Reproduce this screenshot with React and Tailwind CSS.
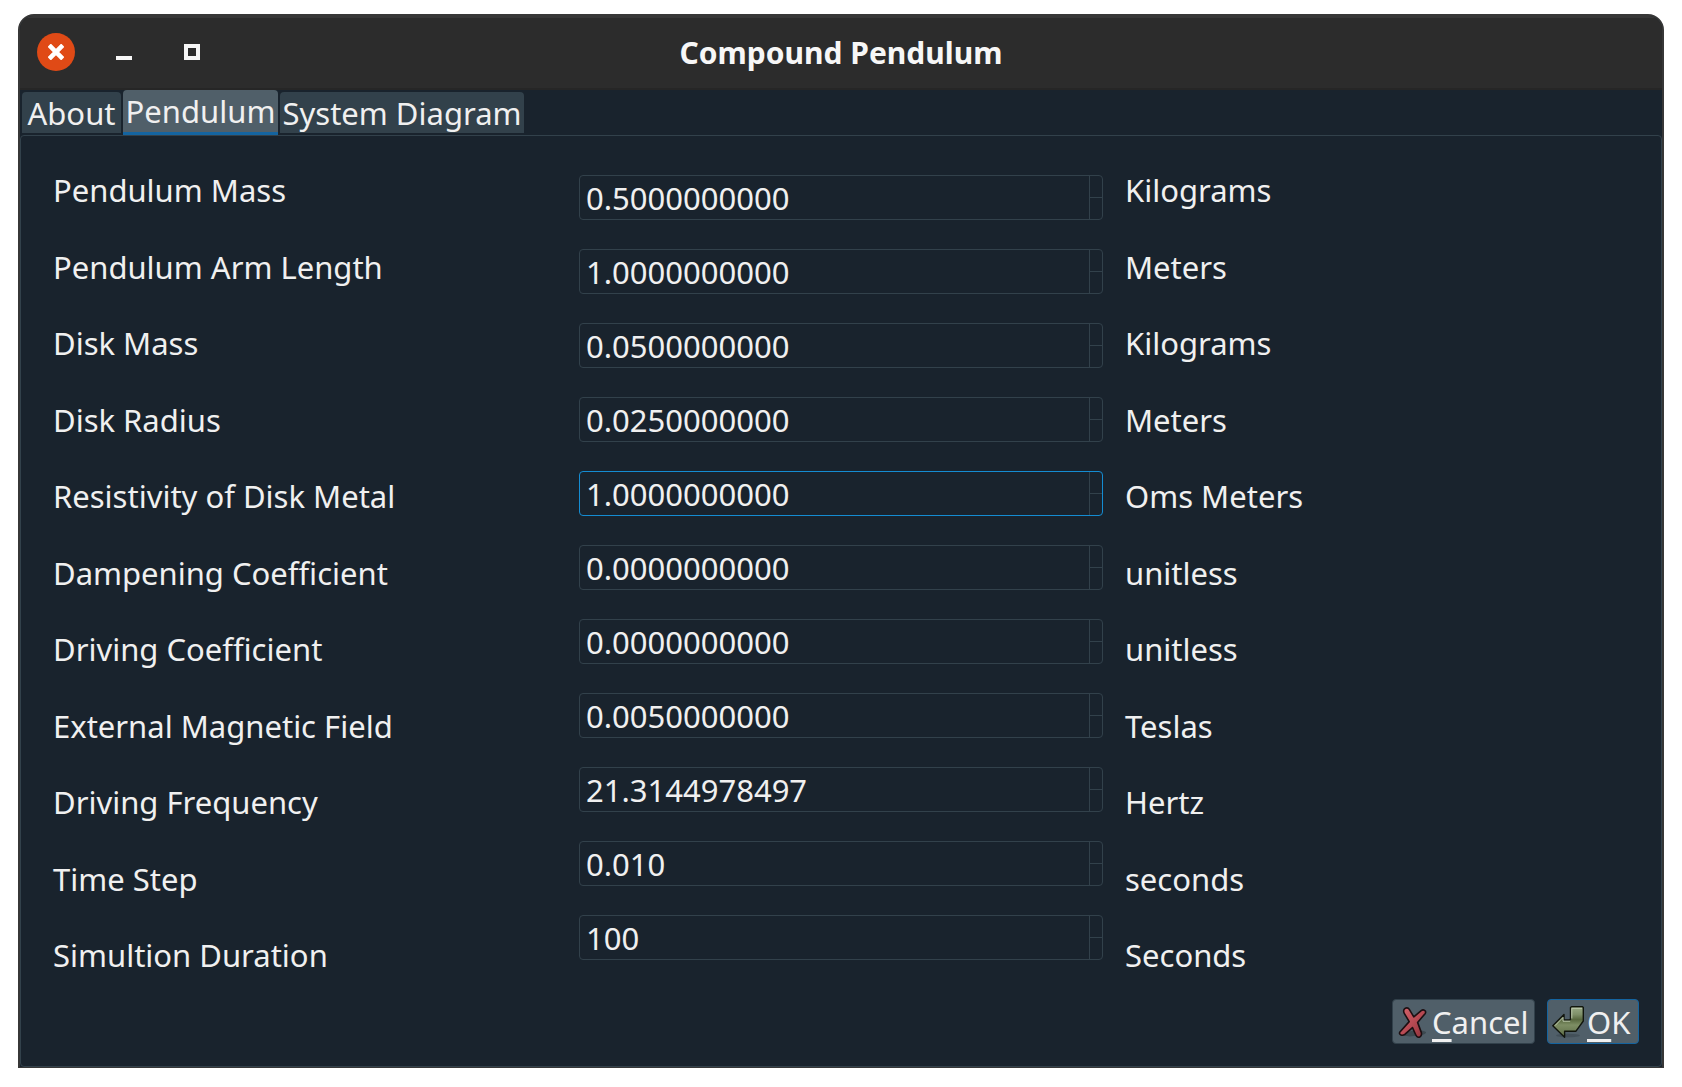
import React, { useState } from "react";

const FIELDS = [
  { id: "pendulum-mass", label: "Pendulum Mass", value: "0.5000000000", unit: "Kilograms" },
  { id: "arm-length", label: "Pendulum Arm Length", value: "1.0000000000", unit: "Meters" },
  { id: "disk-mass", label: "Disk Mass", value: "0.0500000000", unit: "Kilograms" },
  { id: "disk-radius", label: "Disk Radius", value: "0.0250000000", unit: "Meters" },
  { id: "resistivity", label: "Resistivity of Disk Metal", value: "1.0000000000", unit: "Oms Meters", active: true },
  { id: "dampening", label: "Dampening Coefficient", value: "0.0000000000", unit: "unitless" },
  { id: "driving-coefficient", label: "Driving Coefficient", value: "0.0000000000", unit: "unitless" },
  { id: "magnetic-field", label: "External Magnetic Field", value: "0.0050000000", unit: "Teslas" },
  { id: "driving-frequency", label: "Driving Frequency", value: "21.3144978497", unit: "Hertz" },
  { id: "time-step", label: "Time Step", value: "0.010", unit: "seconds" },
  { id: "duration", label: "Simultion Duration", value: "100", unit: "Seconds" },
];

function TitleBar() {
  return (
    <header className="grid h-[74px] grid-cols-[1fr_auto_1fr] items-center border-t-2 border-b-2 border-t-[#373737] border-b-[#262626] bg-[#2c2c2c]">
      <div className="flex items-center pb-[2px] pl-[17px]">
        <button type="button" aria-label="Close" className="flex size-[38px] items-center justify-center rounded-full bg-[#e04a16]">
          <svg viewBox="0 0 16 16" className="size-4" stroke="#fff" strokeWidth="4.600" fill="none">
            <path d="M1.200 1.200 14.800 14.800M14.800 1.200 1.200 14.800" />
          </svg>
        </button>
        <button type="button" aria-label="Minimize" className="ml-[30px] flex size-[38px] items-center justify-center">
          <svg viewBox="0 0 16 16" className="size-4" fill="#f7f7f7">
            <path d="M0 12h16v4H0z" />
          </svg>
        </button>
        <button type="button" aria-label="Maximize" className="ml-[30px] flex size-[38px] items-center justify-center">
          <svg viewBox="0 0 16 16" className="size-4" fill="none" stroke="#f7f7f7" strokeWidth="4">
            <path d="M2 2h12v12H2z" />
          </svg>
        </button>
      </div>
      <h1 className="text-[30px] leading-10 font-bold text-[#f7f7f7]">Compound Pendulum</h1>
    </header>
  );
}

function Tab({ children, selected, width }) {
  return (
    <button
      type="button"
      role="tab"
      aria-selected={selected}
      className={
        selected
          ? `${width} h-[45px] rounded-t border-b-3 border-[#1464a0] bg-[#505f69] text-center leading-10 whitespace-nowrap`
          : `${width} mb-[2px] h-[41px] rounded-t bg-[#32414b] text-center leading-10 whitespace-nowrap`
      }
    >
      {children}
    </button>
  );
}

function SpinBox({ field }) {
  const [value, setValue] = useState(field.value);
  return (
    <div
      className={
        field.active
          ? "flex h-[45px] overflow-hidden rounded border border-[#148cd2]"
          : "flex h-[45px] overflow-hidden rounded border border-[#32414b]"
      }
    >
      <input
        id={field.id}
        type="text"
        inputMode="decimal"
        value={value}
        onChange={(e) => setValue(e.target.value)}
        className="min-w-0 flex-1 bg-transparent pl-[6px] outline-none"
      />
      <div className="flex w-[13px] flex-col border-l border-[#32414b]">
        <button type="button" aria-label={`Increase ${field.label}`} className="flex-1 border-b border-[#32414b]" />
        <button type="button" aria-label={`Decrease ${field.label}`} className="flex-1" />
      </div>
    </div>
  );
}

function CancelIcon() {
  return (
    <svg viewBox="0 0 32 32" className="size-8 shrink-0" aria-hidden="true">
      <defs>
        <linearGradient id="cancelRed" x1="0" y1="0" x2="1" y2="1">
          <stop offset="0" stopColor="#d9666d" />
          <stop offset="0.5" stopColor="#b84b54" />
          <stop offset="1" stopColor="#8d2f38" />
        </linearGradient>
      </defs>
      <path d="M5 28c6-3 18-5 24-2 1 2-6 4-12 4-5 1-12 0-12-2z" fill="#2c363d" opacity="0.55" />
      <path
        d="M7.2 3.2C8.600 1.400 11.200 1.500 12.300 3.300L16.800 10.800 24.200 4.600C26.500 2.900 29.600 5 28.300 7.400L20.600 16.400 24.300 26.400C25 29.200 23.600 31.400 21.600 31.300 20.200 31.200 19.300 30.200 18.700 28.800L15.500 21.600 7.800 28.400C5.500 30.200 1.600 29 2.700 26.200L12.200 15.600 7.400 7.600C6.600 6.200 6.500 4.400 7.200 3.200Z"
        fill="url(#cancelRed)"
        stroke="#1c0f12"
        strokeWidth="1.6"
        strokeLinejoin="round"
      />
    </svg>
  );
}

function OkIcon() {
  return (
    <svg viewBox="0 0 32 32" className="size-8 shrink-0" aria-hidden="true">
      <defs>
        <linearGradient id="okGreen" x1="0" y1="0" x2="0" y2="1">
          <stop offset="0" stopColor="#9aaa86" />
          <stop offset="0.25" stopColor="#7f9069" />
          <stop offset="0.42" stopColor="#58683f" />
          <stop offset="0.6" stopColor="#7d8e64" />
          <stop offset="1" stopColor="#5d6c45" />
        </linearGradient>
      </defs>
      <ellipse cx="16" cy="29.500" rx="12" ry="1.800" fill="#2c363d" opacity="0.35" />
      <path
        d="M18.500 1.500 19.500 .8H30.500L31.300 1.600V15L24 25.200H12.600V31.200L.8 19.800 12 8.400V14H17.600L18.500 13Z"
        fill="url(#okGreen)"
        stroke="#11150d"
        strokeWidth="1.400"
        strokeLinejoin="round"
      />
      <path d="M19.800 12.500V2.300H30" fill="none" stroke="#bcc8ad" strokeWidth="1" />
      <path d="M3 19.600 11 11.500V15.200H18.200" fill="none" stroke="#bcc8ad" strokeWidth="1" />
    </svg>
  );
}

function Mnemonic({ children }) {
  return <span className="underline decoration-3 underline-offset-[5px] [text-decoration-skip-ink:none]">{children}</span>;
}

export default function App() {
  return (
    <div className="flex min-h-screen flex-col bg-white px-[18px] pt-[14px] pb-[19px] font-['Noto_Sans',sans-serif] text-[31px] leading-10 text-[#f0f0f0]">
      <main className="flex flex-1 flex-col overflow-hidden rounded-t-2xl border-2 border-b border-[#373737] bg-[#19232d]">
        <TitleBar />
        <div role="tablist" className="flex items-end gap-[2px] pl-[2px]">
          <Tab width="w-[99px]">About</Tab>
          <Tab width="w-[155px]" selected>Pendulum</Tab>
          <Tab width="w-[244px]">System Diagram</Tab>
        </div>
        <form
          onSubmit={(e) => e.preventDefault()}
          className="flex flex-1 flex-col gap-6 rounded border border-[#32414b] pt-[34px] pr-[22px] pb-[22px] pl-8"
        >
          <div className="grid flex-1 grid-cols-[504fr_524fr_514fr] gap-[22px]">
            <div className="flex flex-col justify-between">
              {FIELDS.map((f) => (
                <label key={f.id} htmlFor={f.id} className="whitespace-nowrap">{f.label}</label>
              ))}
            </div>
            <div className="flex flex-col gap-[29px] pt-[5px]">
              {FIELDS.map((f) => (
                <SpinBox key={f.id} field={f} />
              ))}
            </div>
            <div className="flex flex-col justify-between">
              {FIELDS.map((f) => (
                <span key={f.id}>{f.unit}</span>
              ))}
            </div>
          </div>
          <div className="flex justify-end gap-3">
            <button type="button" className="flex h-[45px] w-[143px] items-center rounded border border-[#32414b] bg-[#505f69] pl-1">
              <CancelIcon />
              <span className="ml-[3px]"><Mnemonic>C</Mnemonic>ancel</span>
            </button>
            <button type="submit" className="flex h-[45px] w-[92px] items-center rounded border border-[#1464a0] bg-[#505f69] pl-1">
              <OkIcon />
              <span className="ml-[3px]"><Mnemonic>O</Mnemonic>K</span>
            </button>
          </div>
        </form>
      </main>
    </div>
  );
}
